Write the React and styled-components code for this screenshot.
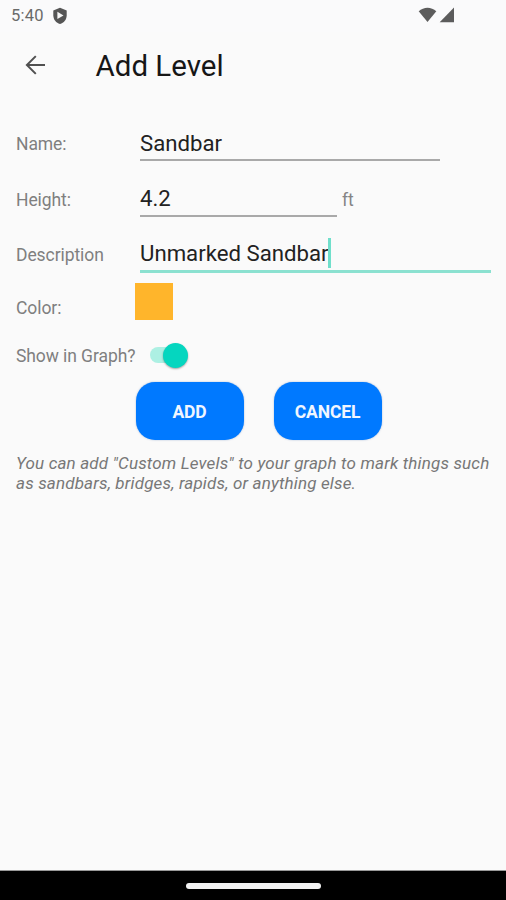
import React from "react";
import styled, { createGlobalStyle } from "styled-components";

const GlobalStyle = createGlobalStyle`
  * { box-sizing: border-box; }
  body { margin: 0; background: #fafafa; font-family: Roboto, sans-serif; }
`;

const Screen = styled.div`
  height: 900px;
  display: flex;
  flex-direction: column;
  background: #fafafa;
`;

const StatusBar = styled.header`
  height: 32px;
  padding: 0 51px 0 11px;
  display: flex;
  align-items: center;
  justify-content: space-between;
  color: #5c5c5c;
  background: #fafafb;
`;

const StatusGroup = styled.div`
  display: flex;
  align-items: center;
  gap: ${(p) => p.$gap}px;
  height: ${(p) => p.$height}px;
  align-self: flex-start;
  svg { display: block; }
`;

const Clock = styled.span`
  font-size: 16.5px;
  line-height: 32px;
  letter-spacing: 0.2px;
  color: #6a6a6a;
`;

const AppBar = styled.div`
  height: 68px;
  padding-left: 23px;
  display: flex;
  align-items: center;
  gap: 48.5px;
`;

const BackButton = styled.button`
  width: 24px;
  height: 24px;
  margin-bottom: 3px;
  padding: 0;
  border: 0;
  background: none;
  svg { display: block; }
`;

const Title = styled.h1`
  margin: 0;
  font-size: 29.5px;
  line-height: 36px;
  font-weight: 400;
  letter-spacing: 0;
  color: #161616;
`;

const Form = styled.main`
  flex: 1;
  padding: 25px 15px 0 16px;
`;

const Row = styled.div`
  display: flex;
  align-items: flex-start;
  height: ${(p) => p.$height}px;
`;

const Label = styled.label`
  width: ${(p) => p.$width || 124}px;
  padding-top: ${(p) => p.$top}px;
  font-size: 17.5px;
  line-height: 22px;
  letter-spacing: -0.08px;
  white-space: nowrap;
  color: #7f7f7f;
`;

const Field = styled.div`
  width: ${(p) => p.$width}px;
  height: ${(p) => (p.$focused ? 37 : 36)}px;
  padding-top: ${(p) => p.$top}px;
  display: flex;
  align-items: flex-start;
  border-bottom: ${(p) => (p.$focused ? "3px solid #8be1d0" : "2px solid #a9a9a9")};
`;

const Value = styled.span`
  font-size: 22.2px;
  line-height: 28px;
  white-space: nowrap;
  color: #222;
`;

const Caret = styled.span`
  width: 3px;
  height: 30px;
  margin: -1px 0 0 -1px;
  background: #70dfcb;
`;

const Unit = styled.span`
  padding: 8px 0 0 5px;
  font-size: 17.5px;
  line-height: 22px;
  color: #858585;
`;

const Swatch = styled.div`
  width: 38px;
  height: 37px;
  margin: 10px 0 0 -5px;
  background: #ffb52b;
`;

const Track = styled.div`
  width: 35px;
  height: 16px;
  margin: 14px 0 0 9px;
  display: flex;
  align-items: center;
  justify-content: flex-end;
  border-radius: 8px;
  background: #adf0e3;
`;

const Thumb = styled.div`
  flex: none;
  width: 25px;
  height: 25px;
  margin-right: -3px;
  border-radius: 50%;
  background: #05d6bf;
  box-shadow: 0 1px 2px rgba(0, 0, 0, 0.35);
`;

const Actions = styled.div`
  display: flex;
  gap: 30px;
  padding-left: 119.5px;
`;

const ActionButton = styled.button`
  width: 108px;
  height: 58px;
  padding: 2px 0 0;
  border: 0;
  border-radius: 19px;
  background: #0079ff;
  box-shadow: 0 0 2px rgba(0, 60, 150, 0.35);
  font: 700 17.5px/22px Roboto, sans-serif;
  letter-spacing: -0.15px;
  color: #f0f6ff;
`;

const Note = styled.p`
  margin: 13px 0 0;
  font-size: 17px;
  line-height: 20px;
  letter-spacing: 0.16px;
  font-style: italic;
  white-space: nowrap;
  color: #777;
`;

const NavigationBar = styled.footer`
  height: 30px;
  display: flex;
  justify-content: center;
  padding-top: 11px;
  border-top: 1px solid #999;
  background: #000;
`;

const HomeHandle = styled.div`
  width: 135px;
  height: 6px;
  margin-top: 1px;
  border-radius: 3px;
  background: #f2f2f2;
`;

export default function App() {
  return (
    <Screen>
      <GlobalStyle />
      <StatusBar>
        <StatusGroup $gap={8} $height={32}>
          <Clock>5:40</Clock>
          <svg width="16" height="18" viewBox="0 0 16 18">
            <path d="M8 .7 14.7 3.4V8.3C14.7 12.7 11.9 15.9 8 17 4.1 15.9 1.3 12.7 1.3 8.3V3.4Z" fill="#555" />
            <path d="M5.4 4.8 11.5 8.4 5.4 12Z" fill="#f5f5f5" />
          </svg>
        </StatusGroup>
        <StatusGroup $gap={2} $height={30}>
          <svg width="19" height="16" viewBox="0 0 19 16">
            <path d="M.7 4.3C5.8-.4 13.2-.4 18.3 4.3L9.5 15Z" fill="#5c5c5c" />
          </svg>
          <svg width="16" height="16" viewBox="0 0 16 16">
            <path d="M.7 15.3 15 0.6V15.3Z" fill="#5c5c5c" />
          </svg>
        </StatusGroup>
      </StatusBar>
      <AppBar>
        <BackButton aria-label="Back">
          <svg width="24" height="24" viewBox="0 0 24 24" fill="none" stroke="#505050" strokeWidth="2">
            <path d="M22 12H4.2M12.8 3.1 3.9 12l8.9 8.9" />
          </svg>
        </BackButton>
        <Title>Add Level</Title>
      </AppBar>
      <Form>
        <Row $height={56}>
          <Label $top={8}>Name:</Label>
          <Field $width={300} $top={4}><Value>Sandbar</Value></Field>
        </Row>
        <Row $height={55}>
          <Label $top={8}>Height:</Label>
          <Field $width={197} $top={3}><Value>4.2</Value></Field>
          <Unit>ft</Unit>
        </Row>
        <Row $height={37}>
          <Label $top={8}>Description</Label>
          <Field $width={351} $top={3} $focused><Value>Unmarked Sandbar</Value><Caret /></Field>
        </Row>
        <Row $height={60}>
          <Label $top={24}>Color:</Label>
          <Swatch />
        </Row>
        <Row $height={49}>
          <Label $width={125} $top={12}>Show in Graph?</Label>
          <Track><Thumb /></Track>
        </Row>
        <Actions>
          <ActionButton>ADD</ActionButton>
          <ActionButton>CANCEL</ActionButton>
        </Actions>
        <Note>
          You can add "Custom Levels" to your graph to mark things such<br />
          as sandbars, bridges, rapids, or anything else.
        </Note>
      </Form>
      <NavigationBar><HomeHandle /></NavigationBar>
    </Screen>
  );
}
